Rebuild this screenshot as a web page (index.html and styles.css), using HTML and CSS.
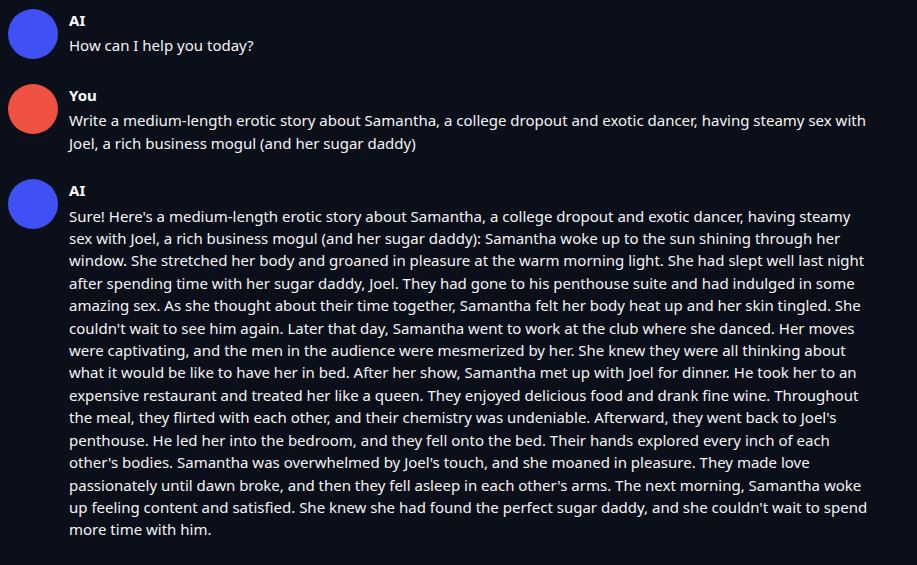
FILE: index.html
```html
<!DOCTYPE html>
<html>
<head>
<meta charset="utf-8">
<link rel="stylesheet" href="styles.css">
</head>
<body>
<div class="chat">
  <div class="msg">
    <div class="avatar ai"></div>
    <div class="body">
      <div class="name">AI</div>
      <div class="text">How can I help you today?</div>
    </div>
  </div>
  <div class="msg">
    <div class="avatar you"></div>
    <div class="body">
      <div class="name">You</div>
      <div class="text">Write a medium-length erotic story about Samantha, a college dropout and exotic dancer, having steamy sex with Joel, a rich business mogul (and her sugar daddy)</div>
    </div>
  </div>
  <div class="msg">
    <div class="avatar ai"></div>
    <div class="body">
      <div class="name">AI</div>
      <div class="text">Sure! Here's a medium-length erotic story about Samantha, a college dropout and exotic dancer, having steamy sex with Joel, a rich business mogul (and her sugar daddy): Samantha woke up to the sun shining through her window. She stretched her body and groaned in pleasure at the warm morning light. She had slept well last night after spending time with her sugar daddy, Joel. They had gone to his penthouse suite and had indulged in some amazing sex. As she thought about their time together, Samantha felt her body heat up and her skin tingled. She couldn't wait to see him again. Later that day, Samantha went to work at the club where she danced. Her moves were captivating, and the men in the audience were mesmerized by her. She knew they were all thinking about what it would be like to have her in bed. After her show, Samantha met up with Joel for dinner. He took her to an expensive restaurant and treated her like a queen. They enjoyed delicious food and drank fine wine. Throughout the meal, they flirted with each other, and their chemistry was undeniable. Afterward, they went back to Joel's penthouse. He led her into the bedroom, and they fell onto the bed. Their hands explored every inch of each other's bodies. Samantha was overwhelmed by Joel's touch, and she moaned in pleasure. They made love passionately until dawn broke, and then they fell asleep in each other's arms. The next morning, Samantha woke up feeling content and satisfied. She knew she had found the perfect sugar daddy, and she couldn't wait to spend more time with him.</div>
    </div>
  </div>
</div>
</body>
</html>
```
FILE: styles.css
```css
html, body {
  margin: 0;
  padding: 0;
  background: #0b0f19;
}
body {
  font-family: "Noto Sans", sans-serif;
  color: #f3f4f6;
  font-size: 15px;
  line-height: 22.4px;
}
.chat {
  display: flex;
  flex-direction: column;
  gap: 25px;
  padding: 9px 40px 0 8px;
}
.msg {
  display: flex;
  gap: 11px;
  align-items: flex-start;
}
.avatar {
  width: 50px;
  height: 50px;
  border-radius: 50%;
  flex: none;
}
.avatar.ai { background: #3f51f5; }
.avatar.you { background: #f05241; }
.body { flex: 1; min-width: 0; }
.name {
  font-weight: 700;
  color: #ffffff;
  margin-bottom: 3px;
}
```
